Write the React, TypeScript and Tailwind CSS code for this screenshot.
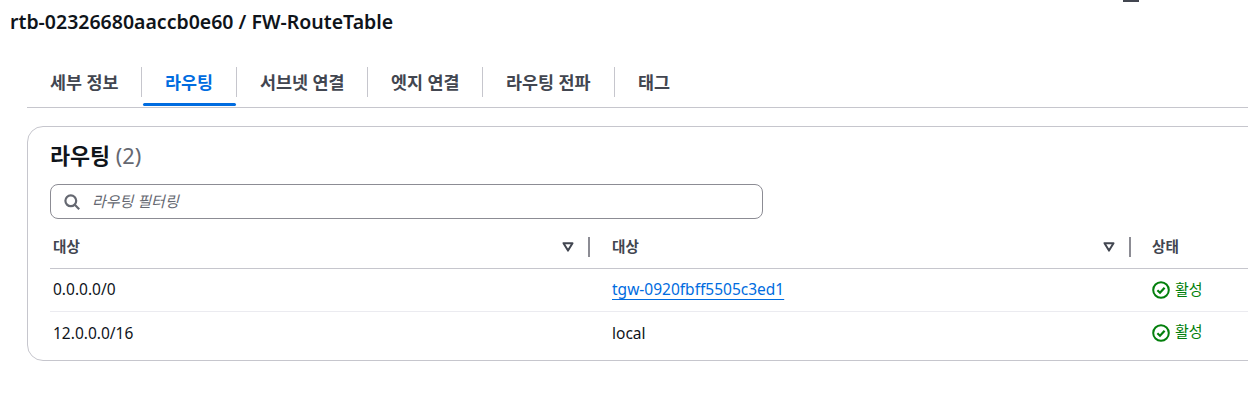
const font = "font-['Noto_Sans','Noto_Sans_CJK_KR',sans-serif]"

const tabs = ['세부 정보', '라우팅', '서브넷 연결', '엣지 연결', '라우팅 전파', '태그']
const tabWidths = ['w-[115px]', 'w-[95px]', 'w-[131px]', 'w-[115px]', 'w-[132px]', 'w-[100px]']

const routes = [
  { destination: '0.0.0.0/0', target: 'tgw-0920fbff5505c3ed1', link: true },
  { destination: '12.0.0.0/16', target: 'local', link: false },
]

function SortIcon() {
  return (
    <svg width="12" height="10" viewBox="0 0 12 10" className="shrink-0">
      <path d="M1.5 1.2h9L6 8.6z" fill="none" stroke="#424650" strokeWidth="2" strokeLinejoin="round" />
    </svg>
  )
}

function StatusIcon() {
  return (
    <svg width="18" height="18" viewBox="0 0 18 18" className="shrink-0">
      <circle cx="9" cy="9" r="7.8" fill="none" stroke="#037f0c" strokeWidth="2" />
      <path d="M5.4 9.2l2.6 2.5 4.6-5" fill="none" stroke="#037f0c" strokeWidth="2.2" />
    </svg>
  )
}

function SearchIcon() {
  return (
    <svg width="16" height="16" viewBox="0 0 16 16" className="shrink-0">
      <circle cx="6.8" cy="6.8" r="5.4" fill="none" stroke="#656871" strokeWidth="2.2" />
      <path d="M10.8 10.8l4.4 4.4" fill="none" stroke="#656871" strokeWidth="2.2" />
    </svg>
  )
}

export default function App() {
  return (
    <div className={`${font} relative w-[1248px] h-[410px] overflow-hidden bg-white text-[#0f141a]`}>
      <div className="absolute left-[1123px] top-0 w-4 h-0.5 bg-[#424650]" />

      <h1 className="pl-[10px] pt-[10px] h-[67px] text-[19.5px] leading-6 font-semibold">
        rtb-02326680aaccb0e60 / FW-RouteTable
      </h1>

      <div className="ml-[27px] flex h-[40px] border-b border-[#c6c6cd] box-content">
        {tabs.map((tab, i) => (
          <div key={tab} className={`${tabWidths[i]} relative h-10`}>
            <div
              className={`flex h-[30px] items-center pl-[23px] text-[17.4px] font-semibold whitespace-nowrap ${
                i < tabs.length - 1 ? 'border-r border-[#c6c6cd]' : ''
              } ${i === 1 ? 'text-[#006ce0]' : 'text-[#424650]'}`}
            >
              {tab}
            </div>
            {i === 1 && <div className="absolute left-px right-px top-[36px] h-[3px] rounded-sm bg-[#006ce0]" />}
          </div>
        ))}
      </div>

      <div className="ml-[27px] mt-[18px] w-[1240px] h-[235px] rounded-2xl border border-[#c6c6cd] pl-[22px]">
        <h2 className="pt-[15px] h-[57px] text-[21.8px] leading-7 font-semibold">
          라우팅 <span className="font-normal text-[#656871]">(2)</span>
        </h2>

        <div className="flex items-center gap-2 w-[713px] h-[35px] rounded-lg border border-[#8c8c94] pl-[13px]">
          <SearchIcon />
          <span className="pl-1 text-[15px] italic text-[#656871]">라우팅 필터링</span>
        </div>

        <div className="mt-[10px] grid grid-cols-[540px_541px_1fr] h-[40px] border-b border-[#c6c6cd] text-[14.6px] font-semibold text-[#424650]">
          <div className="flex items-center pl-[3px] pb-[3px]">
            <span className="flex-1">대상</span>
            <SortIcon />
            <span className="ml-[14px] w-0.5 h-5 bg-[#8c8c94]" />
          </div>
          <div className="flex items-center pl-[22px] pb-[3px]">
            <span className="flex-1">대상</span>
            <SortIcon />
            <span className="ml-[14px] w-0.5 h-5 bg-[#8c8c94]" />
          </div>
          <div className="flex items-center pl-[21px] pb-[3px]">상태</div>
        </div>

        {routes.map((route, i) => (
          <div
            key={route.destination}
            className={`grid grid-cols-[540px_541px_1fr] items-center text-[15.5px] ${
              i === 0 ? 'h-[43px] border-b border-[#ebebf0]' : 'h-[47px] pb-1'
            }`}
          >
            <div className="pl-[3px]">{route.destination}</div>
            <div className="pl-[22px]">
              {route.link ? (
                <a className="text-[#006ce0] underline decoration-1 underline-offset-4">{route.target}</a>
              ) : (
                route.target
              )}
            </div>
            <div className={`flex items-center gap-[5px] pl-[21px] text-[15px] text-[#037f0c] ${i === 1 ? 'pb-0.5' : ''}`}>
              <StatusIcon />
              <span className="pb-0.5">활성</span>
            </div>
          </div>
        ))}
      </div>
    </div>
  )
}
